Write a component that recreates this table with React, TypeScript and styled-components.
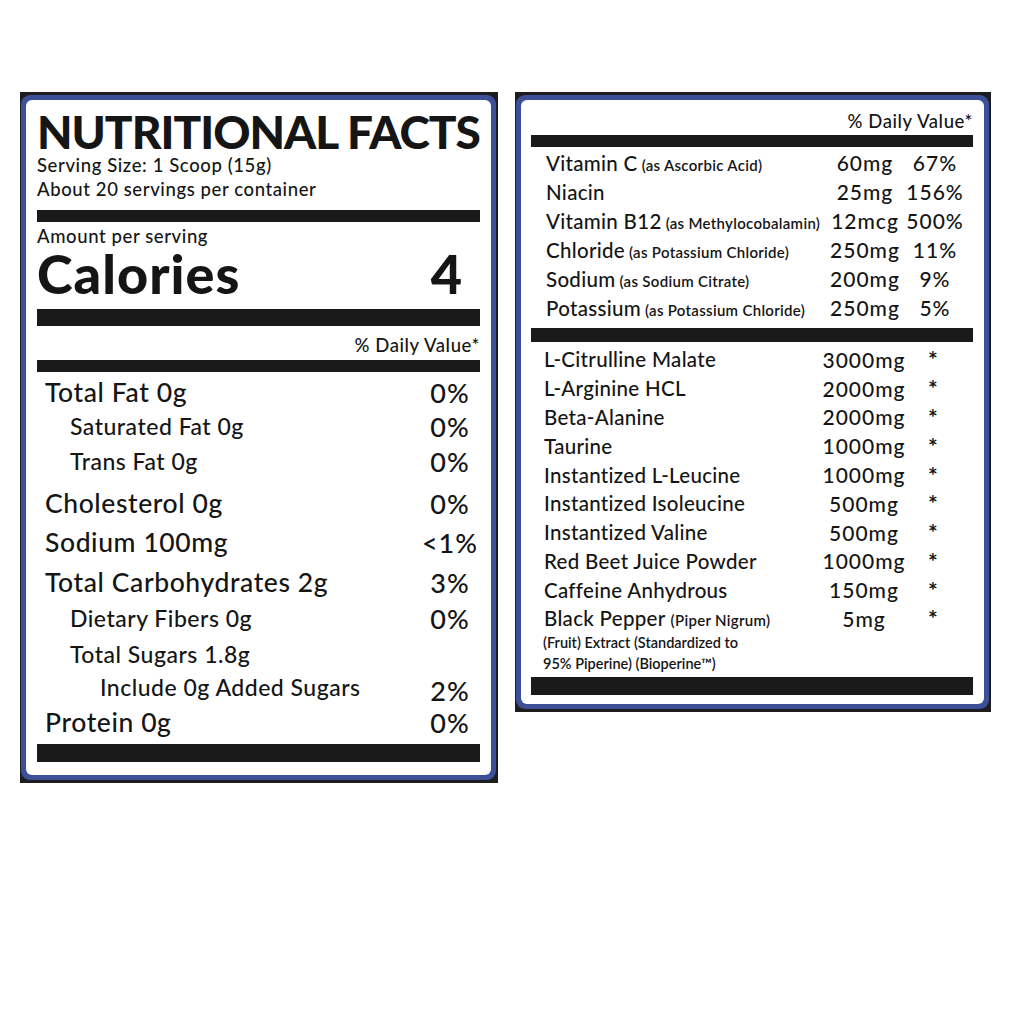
import React from 'react';
import styled, { createGlobalStyle } from 'styled-components';

const Global = createGlobalStyle`
  html, body { margin: 0; padding: 0; background: #ffffff; }
  body { font-family: Lato, "Noto Sans", sans-serif; color: #151515; }
`;

const Page = styled.div`
  display: flex;
  align-items: flex-start;
  gap: 17px;
  padding: 92px 0 0 20px;
`;

const Panel = styled.div<{ $w: number; $h: number }>`
  width: ${p => p.$w}px;
  height: ${p => p.$h}px;
  box-sizing: border-box;
  background: #1d1d20;
  padding: 3px 2px 3px 1px;
  display: flex;
`;

const Frame = styled.div`
  flex: 1;
  display: flex;
  background: #3d5097;
  border-radius: 9px;
  padding: 5px;
`;

const Sheet = styled.div<{ $pad: string }>`
  flex: 1;
  display: flex;
  flex-direction: column;
  background: #ffffff;
  border-radius: 6px;
  padding: ${p => p.$pad};
`;

const Title = styled.h1`
  margin: 0;
  font-size: 46px;
  font-weight: 900;
  line-height: 43px;
  letter-spacing: -1px;
  white-space: nowrap;
`;

const Info = styled.div<{ $mt?: number; $align?: string }>`
  margin-top: ${p => p.$mt ?? 0}px;
  font-size: 18.5px;
  font-weight: 500;
  line-height: 24px;
  letter-spacing: 0.6px;
  text-align: ${p => p.$align ?? 'left'};
  white-space: nowrap;
`;

const Bar = styled.div<{ $h: number; $mt: number }>`
  height: ${p => p.$h}px;
  margin-top: ${p => p.$mt}px;
  background: #1a1a1a;
`;

const CaloriesRow = styled.div`
  display: flex;
  justify-content: space-between;
  font-size: 54px;
  font-weight: 900;
  line-height: 52px;
  letter-spacing: 1px;
  padding-right: 17px;
`;

const NutRow = styled.div<{ $h: number; $mt?: number; $indent: number; $size: number }>`
  display: flex;
  align-items: center;
  justify-content: space-between;
  height: ${p => p.$h}px;
  margin-top: ${p => p.$mt ?? 0}px;
  padding-left: ${p => p.$indent}px;
  font-size: ${p => p.$size}px;
  font-weight: 500;
  letter-spacing: ${p => (p.$size > 25 ? 0.6 : 0.5)}px;
  white-space: nowrap;
`;

const Pct = styled.span<{ $shift?: number }>`
  width: 60px;
  text-align: center;
  font-size: 27px;
  letter-spacing: 1px;
  position: relative;
  top: ${p => p.$shift ?? 0}px;
`;

const FactRow = styled.div<{ $cols: string; $h: number; $indent: number; $mt?: number }>`
  display: grid;
  grid-template-columns: ${p => p.$cols};
  align-items: center;
  height: ${p => p.$h}px;
  margin-top: ${p => p.$mt ?? 0}px;
  padding-left: ${p => p.$indent}px;
  font-size: 20.5px;
  font-weight: 500;
  letter-spacing: 0.3px;
  white-space: nowrap;
`;

const Sub = styled.span`
  font-size: 15px;
  font-weight: 600;
  letter-spacing: 0.3px;
`;

const Cell = styled.span`
  text-align: center;
  font-size: 21px;
  letter-spacing: 1px;
`;

const Star = styled.span`
  text-align: center;
  font-size: 23px;
  font-weight: 700;
`;

const Note = styled.div`
  padding-left: 12px;
  font-size: 14.5px;
  font-weight: 600;
  line-height: 21px;
`;

type Nut = { name: string; pct?: string; h: number; mt?: number; indent: number; size: number; shift?: number };

const nutrients: Nut[] = [
  { name: 'Total Fat 0g', pct: '0%', h: 34, mt: 3, indent: 8, size: 26.5 },
  { name: 'Saturated Fat 0g', pct: '0%', h: 34, indent: 33, size: 23 },
  { name: 'Trans Fat 0g', pct: '0%', h: 36, indent: 33, size: 23 },
  { name: 'Cholesterol 0g', pct: '0%', h: 42, mt: 3, indent: 8, size: 26.5 },
  { name: 'Sodium 100mg', pct: '<1%', h: 36, indent: 8, size: 26.5 },
  { name: 'Total Carbohydrates 2g', pct: '3%', h: 40, mt: 2, indent: 8, size: 26.5 },
  { name: 'Dietary Fibers 0g', pct: '0%', h: 32, indent: 33, size: 23 },
  { name: 'Total Sugars 1.8g', h: 32, mt: 4, indent: 33, size: 23 },
  { name: 'Include 0g Added Sugars', pct: '2%', h: 34, indent: 63, size: 23, shift: 3 },
  { name: 'Protein 0g', pct: '0%', h: 36, indent: 8, size: 26.5 },
];

type Fact = { name: string; sub?: string; amt: string; dv: string };

const vitamins: Fact[] = [
  { name: 'Vitamin C', sub: '(as Ascorbic Acid)', amt: '60mg', dv: '67%' },
  { name: 'Niacin', amt: '25mg', dv: '156%' },
  { name: 'Vitamin B12', sub: '(as Methylocobalamin)', amt: '12mcg', dv: '500%' },
  { name: 'Chloride', sub: '(as Potassium Chloride)', amt: '250mg', dv: '11%' },
  { name: 'Sodium', sub: '(as Sodium Citrate)', amt: '200mg', dv: '9%' },
  { name: 'Potassium', sub: '(as Potassium Chloride)', amt: '250mg', dv: '5%' },
];

const blend: Fact[] = [
  { name: 'L-Citrulline Malate', amt: '3000mg', dv: '*' },
  { name: 'L-Arginine HCL', amt: '2000mg', dv: '*' },
  { name: 'Beta-Alanine', amt: '2000mg', dv: '*' },
  { name: 'Taurine', amt: '1000mg', dv: '*' },
  { name: 'Instantized L-Leucine', amt: '1000mg', dv: '*' },
  { name: 'Instantized Isoleucine', amt: '500mg', dv: '*' },
  { name: 'Instantized Valine', amt: '500mg', dv: '*' },
  { name: 'Red Beet Juice Powder', amt: '1000mg', dv: '*' },
  { name: 'Caffeine Anhydrous', amt: '150mg', dv: '*' },
];

const VIT_COLS = '1fr 78px 62px 7px';
const BLEND_COLS = '1fr 90px 48px 16px';

export default function App() {
  return (
    <>
      <Global />
      <Page>
        <Panel $w={478} $h={691}>
          <Frame>
            <Sheet $pad="10px 11px 0 11px">
              <Title>NUTRITIONAL FACTS</Title>
              <Info>Serving Size: 1 Scoop (15g)</Info>
              <Info>About 20 servings per container</Info>
              <Bar $h={12} $mt={9} />
              <Info $mt={2}>Amount per serving</Info>
              <CaloriesRow>
                <span>Calories</span>
                <span>4</span>
              </CaloriesRow>
              <Bar $h={17} $mt={9} />
              <Info $mt={7} $align="right">% Daily Value*</Info>
              <Bar $h={12} $mt={3} />
              {nutrients.map(n => (
                <NutRow key={n.name} $h={n.h} $mt={n.mt} $indent={n.indent} $size={n.size}>
                  <span>{n.name}</span>
                  {n.pct && <Pct $shift={n.shift}>{n.pct}</Pct>}
                </NutRow>
              ))}
              <Bar $h={18} $mt={4} />
            </Sheet>
          </Frame>
        </Panel>

        <Panel $w={476} $h={620}>
          <Frame>
            <Sheet $pad="9px 11px 0 10px">
              <Info $align="right">% Daily Value*</Info>
              <Bar $h={12} $mt={2} />
              {vitamins.map((v, i) => (
                <FactRow key={v.name} $cols={VIT_COLS} $h={29} $indent={15} $mt={i === 0 ? 1 : 0}>
                  <span>
                    {v.name}
                    {v.sub && <Sub> {v.sub}</Sub>}
                  </span>
                  <Cell>{v.amt}</Cell>
                  <Cell>{v.dv}</Cell>
                </FactRow>
              ))}
              <Bar $h={14} $mt={6} />
              {blend.map((b, i) => (
                <FactRow key={b.name} $cols={BLEND_COLS} $h={28.8} $indent={13} $mt={i === 0 ? 3 : 0}>
                  <span>{b.name}</span>
                  <Cell>{b.amt}</Cell>
                  <Star>{b.dv}</Star>
                </FactRow>
              ))}
              <FactRow $cols={BLEND_COLS} $h={27.8} $indent={13}>
                <span>
                  Black Pepper <Sub>(Piper Nigrum)</Sub>
                </span>
                <Cell>5mg</Cell>
                <Star>*</Star>
              </FactRow>
              <Note>(Fruit) Extract (Standardized to</Note>
              <Note>95% Piperine) (Bioperine™)</Note>
              <Bar $h={18} $mt={3} />
            </Sheet>
          </Frame>
        </Panel>
      </Page>
    </>
  );
}
